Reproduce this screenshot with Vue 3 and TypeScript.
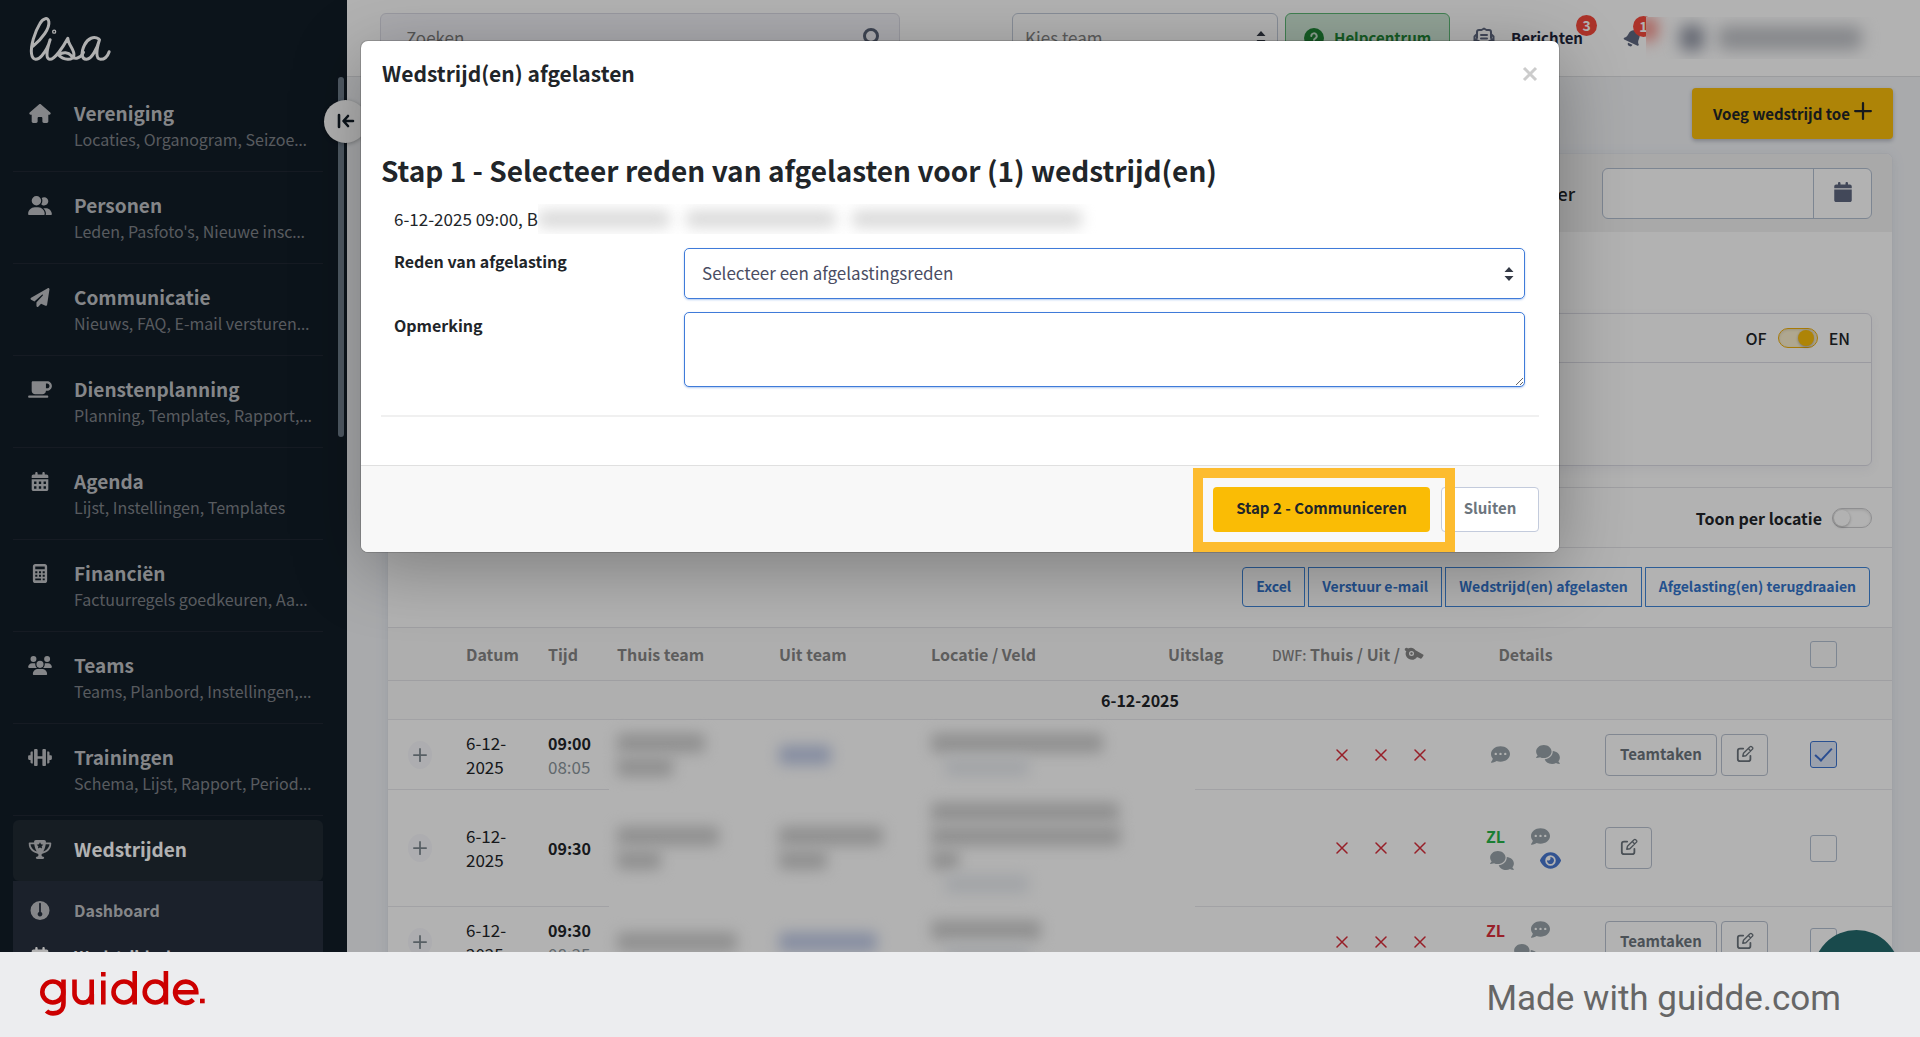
<script setup lang="ts">
import { ref } from 'vue'

interface MenuItem {
  title: string
  sub: string
  more: boolean
  icon: string
}

interface Bar {
  w: number
  tone?: 'blue' | 'pale'
}

interface Match {
  time: string
  meet?: string
  home: Bar[]
  away: Bar[]
  place: Bar[]
  zl?: 'green' | 'red'
  eye?: boolean
  tasks: boolean
  checked: boolean
  tall?: boolean
}

const menu: MenuItem[] = [
  { title: 'Vereniging', sub: 'Locaties, Organogram, Seizoe', more: true, icon: 'home' },
  { title: 'Personen', sub: "Leden, Pasfoto's, Nieuwe insc", more: true, icon: 'people' },
  { title: 'Communicatie', sub: 'Nieuws, FAQ, E-mail versturen', more: true, icon: 'plane' },
  { title: 'Dienstenplanning', sub: 'Planning, Templates, Rapport,', more: true, icon: 'mug' },
  { title: 'Agenda', sub: 'Lijst, Instellingen, Templates', more: false, icon: 'calendar' },
  { title: 'Financiën', sub: 'Factuurregels goedkeuren, Aa', more: true, icon: 'calc' },
  { title: 'Teams', sub: 'Teams, Planbord, Instellingen,', more: true, icon: 'group' },
  { title: 'Trainingen', sub: 'Schema, Lijst, Rapport, Period', more: true, icon: 'dumbbell' },
]

const matches = ref<Match[]>([
  {
    time: '09:00', meet: '08:05', tasks: true, checked: true,
    home: [{ w: 88 }, { w: 56 }], away: [{ w: 52, tone: 'blue' }], place: [{ w: 172 }, { w: 84, tone: 'pale' }],
  },
  {
    time: '09:30', zl: 'green', eye: true, tasks: false, checked: false, tall: true,
    home: [{ w: 102 }, { w: 44 }], away: [{ w: 104 }, { w: 48 }], place: [{ w: 188 }, { w: 190 }, { w: 28 }, { w: 84, tone: 'pale' }],
  },
  {
    time: '09:30', meet: '08:35', zl: 'red', tasks: true, checked: false,
    home: [{ w: 120 }], away: [{ w: 98, tone: 'blue' }], place: [{ w: 110 }, { w: 84, tone: 'pale' }],
  },
])

const actions = ['Excel', 'Verstuur e-mail', 'Wedstrijd(en) afgelasten', 'Afgelasting(en) terugdraaien']
const both = ref(true)
const perLocation = ref(false)
const remark = ref('')
</script>

<template>
  <svg class="defs" aria-hidden="true">
    <symbol id="home" viewBox="0 0 576 512"><path d="M575.8 255.5c0 18-15 32.1-32 32.1h-32l.7 160.2V472c0 22.1-17.9 40-40 40H392c-22.1 0-40-17.9-40-40v-88c0-17.7-14.3-32-32-32h-64c-17.7 0-32 14.3-32 32v88c0 22.1-17.9 40-40 40h-80c-22.1 0-40-17.9-40-40V287.6H32c-18 0-32-14-32-32.1 0-9 3-17 10-24L266.4 8c7-7 15-8 22-8s15 2 21 7l255.400 224.500c8 7 12 15 11 24z" /></symbol>
    <symbol id="people" viewBox="0 0 640 512"><path d="M96 128a128 128 0 1 1 256 0 128 128 0 1 1-256 0zM0 482c0-98 80-178 178-178h92c98 0 178 80 178 178 0 17-13 30-30 30H30c-17 0-30-13-30-30zM609 512H471c6-9 9-20 9-32 0-61-27-115-70-152 2 0 5-.2 7-.2h62c89 0 161 72 161 161 0 13-14 23-31 23zM432 256c-31 0-59-13-79-33 19-27 31-59 31-95 0-27-6-52-18-74 19-14 41-22 66-22 62 0 112 50 112 112s-50 112-112 112z" /></symbol>
    <symbol id="plane" viewBox="0 0 512 512"><path d="M498.100 5.600c10.100 7 15.400 19.100 13.500 31.200l-64 416c-1.500 9.700-7.400 18.200-16 23s-18.900 5.400-28 1.600L284 427.700l-68.500 74.100c-8.900 9.700-22.900 12.900-35.200 8.100S160 493.200 160 480v-83.600c0-4 1.500-7.800 4.200-10.700l167.600-182.900c5.800-6.300 5.600-16-.4-22s-15.700-6.400-22-.7L106 360.800 17.700 316.600C7.100 311.300.3 300.700 0 288.900s5.900-22.800 16.100-28.700l448-256c10.700-6.100 23.900-5.500 34 1.400z" /></symbol>
    <symbol id="mug" viewBox="0 0 640 512"><path fill-rule="evenodd" d="M96 64c0-17.700 14.300-32 32-32h384c70.700 0 128 57.300 128 128s-57.300 128-128 128h-32c0 53-43 96-96 96H192c-53 0-96-43-96-96V64zm384 160h32c35.300 0 64-28.700 64-64s-28.700-64-64-64h-32v128zM32 416h480c17.700 0 32 14.300 32 32s-14.300 32-32 32H32c-17.700 0-32-14.300-32-32s14.300-32 32-32z" /></symbol>
    <symbol id="calendar" viewBox="0 0 448 512"><path fill-rule="evenodd" d="M128 0c17.700 0 32 14.300 32 32v32h128V32c0-17.700 14.300-32 32-32s32 14.300 32 32v32h48c26.500 0 48 21.500 48 48v48H0v-48c0-26.500 21.500-48 48-48h48V32c0-17.700 14.300-32 32-32zM0 192h448v272c0 26.500-21.500 48-48 48H48c-26.500 0-48-21.500-48-48V192zm64 64v64h64v-64H64zm128 0v64h64v-64h-64zm128 0v64h64v-64h-64zM64 384v64h64v-64H64zm128 0v64h64v-64h-64zm128 0v64h64v-64h-64z" /></symbol>
    <symbol id="calendar-solid" viewBox="0 0 448 512"><path d="M96 32v32H48C21.500 64 0 85.500 0 112v48h448v-48c0-26.500-21.500-48-48-48h-48V32c0-17.700-14.300-32-32-32s-32 14.300-32 32v32H160V32c0-17.700-14.300-32-32-32S96 14.300 96 32zm352 160H0v272c0 26.500 21.500 48 48 48h352c26.500 0 48-21.500 48-48V192z" /></symbol>
    <symbol id="calc" viewBox="0 0 384 512"><path fill-rule="evenodd" d="M64 0h256c35 0 64 29 64 64v384c0 35-29 64-64 64H64c-35 0-64-29-64-64V64C0 29 29 0 64 0zm0 64v80h256V64H64zm0 130v52h56v-52H64zm100 0v52h56v-52h-56zm100 0v52h56v-52h-56zM64 290v52h56v-52H64zm100 0v52h56v-52h-56zm100 0v52h56v-52h-56zM64 388v52h156v-52H64zm200 0v52h56v-52h-56z" /></symbol>
    <symbol id="group" viewBox="0 0 640 512"><path d="M144 0a80 80 0 1 1 0 160 80 80 0 1 1 0-160zm368 0a80 80 0 1 1 0 160 80 80 0 1 1 0-160zM0 298.700C0 239.800 47.800 192 106.700 192h42.700c15.900 0 31 3.500 44.600 9.700-1.300 7.200-1.900 14.700-1.900 22.300 0 38.200 16.800 72.500 43.300 96H21.300C9.600 320 0 310.400 0 298.700zM405.300 320c26.600-23.500 43.300-57.800 43.300-96 0-7.600-.7-15-1.900-22.300 13.600-6.300 28.700-9.700 44.600-9.700h42.700c58.900 0 106.700 47.800 106.700 106.700 0 11.800-9.600 21.300-21.300 21.300H405.300zM224 224a96 96 0 1 1 192 0 96 96 0 1 1-192 0zM128 485.300C128 411.700 187.700 352 261.300 352h117.400c73.600 0 133.300 59.700 133.300 133.300 0 14.700-11.900 26.700-26.700 26.700H154.700c-14.700 0-26.700-11.900-26.700-26.700z" /></symbol>
    <symbol id="dumbbell" viewBox="0 0 640 512"><path d="M160 56c0-18 14-32 32-32h32c18 0 32 14 32 32v168h128V56c0-18 14-32 32-32h32c18 0 32 14 32 32v400c0 18-14 32-32 32h-32c-18 0-32-14-32-32V288H256v168c0 18-14 32-32 32h-32c-18 0-32-14-32-32V56zM126 96v320H96c-18 0-32-14-32-32v-64H32c-18 0-32-14-32-32v-64c0-18 14-32 32-32h32v-64c0-18 14-32 32-32h30zM514 96v320h30c18 0 32-14 32-32v-64h32c18 0 32-14 32-32v-64c0-18-14-32-32-32h-32v-64c0-18-14-32-32-32h-30z" /></symbol>
    <symbol id="trophy" viewBox="-16 0 608 512"><path fill-rule="evenodd" d="M176 0h224c27 0 48 22 47 48l-1 16h122c13 0 24 11 24 24 0 92-33 158-80 201-46 43-103 63-146 72-26 10-38 20-38 45 0 23 18 42 41 42h-1c18 0 32 14 32 32s-14 32-32 32H208c-18 0-32-14-32-32s14-32 32-32h-1c23 0 41-19 41-42 0-25-12-35-38-45-43-9-100-29-146-72C17 246-16 180-16 88c0-13 11-24 24-24h122l-1-16c-1-26 20-48 47-48zM33 112c5 66 41 111 74 142 29 26 62 43 92 53-34-56-57-137-66-195H33zm510 0H443c-9 58-32 139-66 195 30-10 63-27 92-53 33-31 69-76 74-142zM288 60l-28 56-61 9 44 43-11 61 56-29 56 29-11-61 44-43-61-9-28-56z" /></symbol>
    <symbol id="gauge" viewBox="0 0 512 512"><path fill-rule="evenodd" d="M0 256a256 256 0 1 1 512 0 256 256 0 1 1-512 0zM280 72c0-13-11-24-24-24s-24 11-24 24v222a64 64 0 1 0 48 0V72z" /></symbol>
    <symbol id="dots" viewBox="0 0 512 512"><path fill-rule="evenodd" d="M256 448c141.400 0 256-93.100 256-208S397.400 32 256 32 0 125.100 0 240c0 45.100 17.700 86.800 47.700 120.900-1.900 24.500-11.400 46.300-21.400 62.900-5.500 9.200-11.100 16.600-15.200 21.600l-6.500 7.400c-4.600 4.600-5.900 11.400-3.400 17.400s8.300 9.900 14.800 9.900c28.700 0 57.600-8.900 81.600-19.300 22.900-10 42.400-21.900 54.300-30.600 31.800 11.500 67 17.900 104.100 17.900zM128 208a32 32 0 1 1 0 64 32 32 0 1 1 0-64zm128 0a32 32 0 1 1 0 64 32 32 0 1 1 0-64zm96 32a32 32 0 1 1 64 0 32 32 0 1 1-64 0z" /></symbol>
    <symbol id="comments" viewBox="0 0 640 512"><path d="M208 352c114.900 0 208-78.800 208-176S322.900 0 208 0 0 78.800 0 176c0 38.600 14.700 74.300 39.600 103.400-3.500 9.400-8.700 17.700-14.200 24.700-4.800 6.200-9.700 11-13.300 14.300L6.500 323C1 327.200-1.400 334.400.8 340.900S9.100 352 16 352c21.800 0 43.800-5.600 62.100-12.500 9.200-3.500 17.800-7.400 25.200-11.400C134.100 343.300 169.800 352 208 352zm240-176c0 112.300-99.100 196.900-216.500 207C255.800 457.400 336.400 512 432 512c38.200 0 73.900-8.700 104.700-23.900 7.500 4 16 7.900 25.200 11.400 18.300 6.900 40.300 12.500 62.100 12.500 6.900 0 13.100-4.500 15.200-11.100s-.2-13.800-5.800-17.900l-5.600-4.700c-3.600-3.300-8.500-8.100-13.300-14.300-5.500-7-10.700-15.400-14.200-24.700 24.900-29 39.600-64.700 39.600-103.400 0-92.800-84.900-168.900-192.600-175.500.4 5.100.7 10.300.7 15.600z" /></symbol>
    <symbol id="eye" viewBox="0 0 576 512"><path fill-rule="evenodd" d="M288 32c-80.800 0-145.500 36.800-192.600 80.600C48.600 156 17.300 208 2.500 243.700c-3.300 7.900-3.300 16.700 0 24.600C17.300 304 48.600 356 95.400 399.400 142.500 443.200 207.200 480 288 480s145.500-36.800 192.600-80.600c46.800-43.500 78.100-95.400 93-131.100 3.300-7.900 3.300-16.700 0-24.600-14.900-35.700-46.200-87.700-93-131.100C433.500 68.800 368.800 32 288 32zM144 256a144 144 0 1 1 288 0 144 144 0 1 1-288 0zm144-64c0 35.300-28.700 64-64 64-7.100 0-13.900-1.200-20.300-3.300-5.500-1.800-11.900 1.600-11.700 7.400.3 6.900 1.300 13.800 3.200 20.700 13.700 51.200 66.400 81.600 117.600 67.900s81.600-66.400 67.900-117.600c-11.100-41.500-47.800-69.400-88.600-71.100-5.800-.2-9.200 6.100-7.400 11.700 2.100 6.400 3.300 13.200 3.300 20.300z" /></symbol>
    <symbol id="edit" viewBox="0 0 20 20"><g fill="none" stroke="currentColor" stroke-width="2" stroke-linejoin="round" stroke-linecap="round"><path d="M8 4H4.500A2.500 2.500 0 0 0 2 6.500v9A2.500 2.500 0 0 0 4.500 18h9a2.500 2.500 0 0 0 2.500-2.500V12" /><path d="M7.500 12.500l.8-3.300 7.300-7.300a1.300 1.300 0 0 1 1.900 0l.8.8a1.300 1.300 0 0 1 0 1.900l-7.300 7.300zM13.700 4l2.600 2.600" stroke-width="1.500" /></g></symbol>
    <symbol id="cross" viewBox="0 0 12 12"><path d="M1 1l10 10M11 1L1 11" fill="none" stroke="currentColor" stroke-width="1.500" stroke-linecap="round" /></symbol>
    <symbol id="plus" viewBox="0 0 16 16"><path d="M8 1v14M1 8h14" fill="none" stroke="currentColor" stroke-width="2" stroke-linecap="round" /></symbol>
    <symbol id="sort" viewBox="0 0 10 14"><path d="M5 0l4.500 5h-9zM5 14l4.500-5h-9z" /></symbol>
    <symbol id="bell" viewBox="0 0 18 18"><g transform="rotate(25 9 9)"><path d="M9 1c.7 0 1.200.5 1.200 1.100 2.600.6 4 2.600 4 5.200 0 2.500.6 3.700 2 4.900.4.400.2 1.300-.6 1.300H2.400c-.8 0-1-.9-.6-1.300 1.400-1.200 2-2.400 2-4.900 0-2.600 1.400-4.600 4-5.200C7.800 1.500 8.300 1 9 1zM6.800 14.800h4.400a2.200 2.200 0 0 1-4.400 0z" /></g></symbol>
    <symbol id="whistle" viewBox="0 0 20 14"><path fill-rule="evenodd" d="M1 1.500C2 .5 3.500.5 4 1.500 7 0 10 .8 11.500 3.200L19 7.500c.6.4.7 1 .3 1.500l-1.600 2.300c-.3.500-.9.600-1.400.3L13 9.900C11.500 12.600 8 13.500 5 12 2 10.300.8 7 2.300 4 1 4 .3 2.500 1 1.500zM7.500 4a2.500 2.500 0 1 0 0 5 2.500 2.500 0 0 0 0-5z" /><circle cx="7.500" cy="6.500" r="1.200" /></symbol>
  </svg>

  <div class="app">
    <div class="screen">
      <aside class="sidebar">
        <a href="#" class="logo" aria-label="lisa">
          <svg viewBox="80 40 260 150" fill="none" stroke="currentColor" stroke-width="9" stroke-linecap="round" stroke-linejoin="round">
            <path d="M97 140C125 118 148 85 145 66C143 52 128 54 118 72C102 98 90 140 93 162C96 184 112 182 124 168C138 152 145 135 149 120C142 142 132 178 148 179C162 180 188 142 202 116C204 138 224 152 220 168C216 184 190 182 174 166C188 156 204 158 212 168C222 182 240 176 249 158" />
            <path d="M295 118C280 108 262 116 252 136C240 160 244 180 258 179C274 178 290 146 297 120C288 148 284 178 300 179C314 179 322 168 326 156" />
            <circle cx="161" cy="96" r="2" />
          </svg>
        </a>
        <nav>
          <a v-for="m in menu" :key="m.title" href="#" class="item">
            <svg class="ico"><use :href="'#' + m.icon" /></svg>
            <span class="item-text">
              <span class="item-title">{{ m.title }}</span>
              <span class="item-sub">{{ m.sub }}<span v-if="m.more" class="more">…</span></span>
            </span>
          </a>
          <a href="#" class="item-active">
            <svg class="ico"><use href="#trophy" /></svg>
            <span class="item-title">Wedstrijden</span>
          </a>
          <div class="submenu">
            <a href="#" class="sub-item"><svg class="ico"><use href="#gauge" /></svg>Dashboard</a>
            <a href="#" class="sub-item current"><svg class="ico"><use href="#calendar" /></svg>Wedstrijdschema</a>
          </div>
        </nav>
        <span class="scrollbar"></span>
        <button class="collapse" aria-label="Menu inklappen">
          <svg width="18" height="16" viewBox="0 0 18 16" fill="none" stroke="currentColor" stroke-width="2.600" stroke-linecap="round" stroke-linejoin="round"><path d="M2 2v12M16 8H8M11 3L6.500 8l4.500 5" /></svg>
        </button>
      </aside>

      <div class="main">
        <header class="topbar">
          <label class="search">
            <input type="text" placeholder="Zoeken" aria-label="Zoeken" />
            <svg width="20" height="20" viewBox="0 0 20 20" fill="none" stroke="currentColor" stroke-width="3"><circle cx="10" cy="8" r="6.500" /><path d="M14 13l4 5" /></svg>
          </label>
          <div class="team">
            <select aria-label="Kies team"><option>Kies team</option></select>
            <svg class="sort"><use href="#sort" /></svg>
          </div>
          <button class="help">
            <svg width="20" height="20" viewBox="0 0 20 20"><circle cx="10" cy="10" r="10" fill="currentColor" /><path d="M7.300 8a2.700 2.700 0 1 1 4 2.400c-.9.500-1.300.9-1.300 1.700M10 14.300v.4" fill="none" stroke="#c9e5d0" stroke-width="2" stroke-linecap="round" /></svg>
            <span>Helpcentrum</span>
          </button>
          <a href="#" class="messages">
            <svg width="22" height="22" viewBox="0 0 22 22" fill="none" stroke="currentColor" stroke-width="2" stroke-linecap="round" stroke-linejoin="round"><path d="M4 11V5c0-1 .8-2 2-2h2.500L11 1.500 13.500 3H16c1.200 0 2 1 2 2v6M8 8h6M8 11.500h6M1.500 9.500V19h19V9.500l-2-2M3.500 7.500l-2 2M2 12l7 4h4l7-4" /></svg>
            <span>Berichten</span>
            <b class="badge">3</b>
          </a>
          <a href="#" class="bell" aria-label="Meldingen">
            <svg width="20" height="20"><use href="#bell" /></svg>
            <b class="badge">1</b>
          </a>
          <div class="account"><i class="smudge red"></i><i class="smudge face"></i><i class="smudge name"></i></div>
        </header>

        <main class="content">
          <button class="add"><span>Voeg wedstrijd toe</span><svg width="18" height="18"><use href="#plus" /></svg></button>

          <section class="card">
            <div class="card-head">
              <label for="filter">Filter</label>
              <div class="date-group">
                <input id="filter" type="text" />
                <button aria-label="Kalender"><svg width="18" height="20"><use href="#calendar-solid" /></svg></button>
              </div>
            </div>
            <div class="filters">
              <div class="panel">
                <div class="panel-head">
                  <span>OF</span>
                  <input v-model="both" type="checkbox" class="switch" aria-label="OF of EN" />
                  <span>EN</span>
                </div>
              </div>
            </div>
            <div class="location">
              <label for="per-location">Toon per locatie</label>
              <input id="per-location" v-model="perLocation" type="checkbox" class="switch" />
            </div>
            <div class="actions">
              <button v-for="a in actions" :key="a">{{ a }}</button>
            </div>
            <table>
              <colgroup>
                <col style="width: 70px" /><col style="width: 82px" /><col style="width: 69px" />
                <col style="width: 162px" /><col style="width: 152px" /><col />
                <col style="width: 35px" /><col style="width: 69px" /><col style="width: 190px" />
                <col style="width: 143px" /><col style="width: 205px" /><col style="width: 90px" />
              </colgroup>
              <thead>
                <tr>
                  <th></th>
                  <th>Datum</th>
                  <th>Tijd</th>
                  <th>Thuis team</th>
                  <th>Uit team</th>
                  <th>Locatie / Veld</th>
                  <th colspan="2">Uitslag</th>
                  <th><small>DWF:</small> Thuis / Uit / <svg width="20" height="14"><use href="#whistle" /></svg></th>
                  <th class="mid">Details</th>
                  <th></th>
                  <th><input type="checkbox" class="tick" aria-label="Alles selecteren" /></th>
                </tr>
              </thead>
              <tbody>
                <tr class="day"><td colspan="12">6-12-2025</td></tr>
                <tr v-for="(m, i) in matches" :key="i" :class="{ tall: m.tall }">
                  <td><button class="expand" aria-label="Uitklappen"><svg width="14" height="14"><use href="#plus" /></svg></button></td>
                  <td>6-12-<br />2025</td>
                  <td><b>{{ m.time }}</b><template v-if="m.meet"><br /><span class="meet">{{ m.meet }}</span></template></td>
                  <td class="hidden"><i v-for="(b, k) in m.home" :key="k" class="bar" :class="b.tone" :style="{ width: b.w + 'px' }"></i></td>
                  <td class="hidden"><i v-for="(b, k) in m.away" :key="k" class="bar" :class="b.tone" :style="{ width: b.w + 'px' }"></i></td>
                  <td class="hidden"><i v-for="(b, k) in m.place" :key="k" class="bar" :class="b.tone" :style="{ width: b.w + 'px' }"></i></td>
                  <td class="hidden"></td>
                  <td></td>
                  <td><span class="dwf"><svg v-for="n in 3" :key="n" width="12" height="12"><use href="#cross" /></svg></span></td>
                  <td>
                    <div v-if="m.zl" class="details two">
                      <span class="first"><b :class="m.zl">ZL</b><svg width="19" height="19"><use href="#dots" /></svg></span>
                      <span><svg width="24" height="19"><use href="#comments" /></svg><svg v-if="m.eye" class="eye" width="21" height="19"><use href="#eye" /></svg></span>
                    </div>
                    <div v-else class="details">
                      <svg width="19" height="19"><use href="#dots" /></svg>
                      <svg width="24" height="19"><use href="#comments" /></svg>
                    </div>
                  </td>
                  <td>
                    <div class="row-actions">
                      <button v-if="m.tasks">Teamtaken</button>
                      <button class="edit" aria-label="Bewerken"><svg width="18" height="18"><use href="#edit" /></svg></button>
                    </div>
                  </td>
                  <td><input v-model="m.checked" type="checkbox" class="tick" aria-label="Selecteer wedstrijd" /></td>
                </tr>
              </tbody>
            </table>
          </section>
        </main>
        <span class="chat"></span>
      </div>

      <div class="overlay">
        <div class="modal" role="dialog" aria-modal="true" aria-labelledby="modal-title">
          <div class="modal-head">
            <h1 id="modal-title">Wedstrijd(en) afgelasten</h1>
            <button aria-label="Sluiten"><svg width="16" height="16" viewBox="0 0 16 16"><path d="M2 2l12 12M14 2L2 14" fill="none" stroke="currentColor" stroke-width="3" /></svg></button>
          </div>
          <div class="modal-body">
            <h2>Stap 1 - Selecteer reden van afgelasten voor (1) wedstrijd(en)</h2>
            <p class="match"><span>6-12-2025 09:00, B</span><span class="redacted"><i></i><i></i><i></i></span></p>
            <div class="field">
              <label for="reason">Reden van afgelasting</label>
              <div class="select">
                <select id="reason"><option>Selecteer een afgelastingsreden</option></select>
                <svg class="sort"><use href="#sort" /></svg>
              </div>
            </div>
            <div class="field">
              <label for="remark">Opmerking</label>
              <textarea id="remark" v-model="remark"></textarea>
            </div>
            <hr />
          </div>
          <div class="modal-foot">
            <div class="spot"><button class="primary">Stap 2 - Communiceren</button></div>
            <button class="secondary">Sluiten</button>
          </div>
        </div>
      </div>
    </div>

    <footer class="brand">
      <svg width="166" height="48" viewBox="0 0 166 48" fill="none" stroke="currentColor" stroke-width="4.600" role="img" aria-label="guidde.">
        <circle cx="12.800" cy="23" r="10.500" />
        <path d="M23.500 10.500V34c0 7-4.500 10.400-10.500 10.400-3 0-5-.8-6.500-2.400" />
        <path d="M34.500 10.500V25a8.600 8.600 0 0 0 17.200 0V10.500M51.800 25v10.500" />
        <path d="M63.300 11.500v24M63.300 3v4.600" />
        <circle cx="84" cy="23" r="10.500" /><path d="M94.700 2v33.500" />
        <circle cx="115.200" cy="23" r="10.500" /><path d="M125.900 2v33.500" />
        <path d="M136 23.200h20.300a10.600 10.600 0 1 0-3 7.400" />
        <path d="M160 32h4.700" />
      </svg>
      <span>Made with guidde.com</span>
    </footer>
  </div>
</template>

<style>
body {
  margin: 0;
  background: #ecedef;
}
</style>

<style scoped>
* {
  box-sizing: border-box;
}
.app {
  height: 100vh;
  display: grid;
  grid-template-rows: minmax(0, 1fr) 85px;
  font: 400 16px/24px "Noto Sans CJK SC", "Noto Sans", sans-serif;
  color: #212529;
}
button, input, select, textarea {
  font: inherit;
  color: inherit;
  margin: 0;
}
button {
  padding: 0 0 2px;
  background: none;
  font-size: 15px;
  font-weight: 700;
}
a {
  color: inherit;
  text-decoration: none;
}
svg {
  fill: currentColor;
  flex: none;
}
svg[fill="none"] {
  fill: none;
}
.defs {
  position: absolute;
  width: 0;
  height: 0;
}
.screen {
  position: relative;
  overflow: hidden;
  display: flex;
}

/* sidebar */
.sidebar {
  position: relative;
  flex: none;
  width: 347px;
  padding: 0 24px 0 13px;
  background: #121d28;
  color: #bfc1c4;
}
.logo {
  display: block;
  height: 80px;
  padding: 13px 0 0 14px;
  color: #fdfdfd;
}
.logo svg {
  width: 87px;
  height: 50px;
}
.item {
  display: flex;
  height: 92px;
  padding: 19px 0 0 15px;
  gap: 22px;
  border-bottom: 1px solid #202733;
}
.ico {
  width: 24px;
  height: 19px;
  margin-top: 5px;
}
.item-text {
  min-width: 0;
  flex: 1;
}
.item-title {
  display: block;
  font-size: 19px;
  line-height: 28px;
  font-weight: 700;
}
.item-sub {
  display: block;
  white-space: nowrap;
  color: #7f8388;
}
.more {
  font-family: "Noto Sans", sans-serif;
}
.item-active {
  display: flex;
  gap: 22px;
  margin-top: 4px;
  height: 61px;
  padding: 15px;
  border-radius: 6px;
  background: #202a33;
  color: #fff;
}
.item-active .ico {
  color: #bfc1c4;
}
.submenu {
  background: #28303e;
  padding-top: 6px;
}
.sub-item {
  display: flex;
  align-items: center;
  gap: 22px;
  height: 46px;
  padding-left: 15px;
  font-weight: 700;
}
.sub-item .ico {
  margin-top: 0;
}
.sub-item.current {
  color: #fff;
}
.scrollbar {
  position: absolute;
  left: 338px;
  top: 77px;
  width: 6px;
  height: 360px;
  border-radius: 3px;
  background: #71808f;
}
.collapse {
  position: absolute;
  z-index: 2;
  left: 324px;
  top: 100px;
  width: 43px;
  height: 43px;
  border: 0;
  border-radius: 50%;
  display: flex;
  align-items: center;
  justify-content: center;
  background: #fff;
  color: #121d28;
  box-shadow: 0 1px 4px rgba(0, 0, 0, 0.3);
}

/* top bar */
.main {
  position: relative;
  flex: 1;
  min-width: 0;
  background: #f2f4f7;
}
.topbar {
  display: flex;
  align-items: center;
  height: 77px;
  padding: 0 27px 0 33px;
  background: #fff;
  border-bottom: 1px solid #dfe0e3;
}
.search, .team, .help {
  display: flex;
  align-items: center;
  height: 50px;
  border: 1px solid #dcdce6;
  border-radius: 6px;
}
.search {
  width: 520px;
  padding: 0 18px 0 25px;
  background: #f4f4f9;
  color: #5a6378;
}
.search input {
  flex: 1;
  min-width: 0;
  border: 0;
  padding: 0;
  background: none;
  font-size: 17px;
}
.search input::placeholder {
  color: #7c7c7c;
}
.team {
  position: relative;
  width: 266px;
  margin-left: auto;
  border-color: #c3ccda;
}
.team select, .select select {
  appearance: none;
  width: 100%;
  height: 100%;
  border: 0;
  padding: 0 12px;
  background: none;
  color: #858585;
  font-size: 17px;
}
.sort {
  position: absolute;
  right: 11px;
  width: 10px;
  height: 14px;
  pointer-events: none;
  color: #343a46;
}
.help {
  justify-content: center;
  gap: 10px;
  width: 165px;
  margin-left: 7px;
  padding: 0;
  border-color: #5cb874;
  background: #d0e8d7;
  color: #1f8436;
}
.messages, .bell {
  position: relative;
  display: flex;
  align-items: center;
  gap: 16px;
  color: #5f6880;
}
.messages {
  margin-left: 23px;
}
.messages span {
  color: #20253a;
  font-size: 15px;
  font-weight: 700;
}
.bell {
  margin-left: 40px;
}
.badge {
  position: absolute;
  left: 103px;
  top: -11px;
  width: 21px;
  height: 21px;
  border-radius: 50%;
  background: #f64a3d;
  color: #fff;
  font-size: 14px;
  line-height: 20px;
  text-align: center;
}
.bell .badge {
  left: 10px;
  top: -12px;
}
.account {
  position: relative;
  z-index: 1;
  display: flex;
  align-items: center;
  gap: 14px;
  width: 247px;
  height: 42px;
  margin-left: 3px;
  overflow: hidden;
  background: #fff;
}
.smudge {
  border-radius: 8px;
  background: #9ea2ac;
  filter: blur(8px);
}
.smudge.red {
  align-self: flex-start;
  width: 16px;
  height: 24px;
  margin-left: -6px;
  background: #f26a5f;
}
.smudge.face {
  width: 24px;
  height: 26px;
  margin-left: 10px;
  background: #8e93a2;
}
.smudge.name {
  width: 144px;
  height: 24px;
  background: #c0c2c7;
}

/* content */
.content {
  padding: 11px 27px 0 40px;
}
.add {
  display: flex;
  align-items: center;
  justify-content: center;
  gap: 4px;
  width: 201px;
  height: 51px;
  margin: 0 0 14px auto;
  padding: 0;
  border: 0;
  border-radius: 4px;
  background: #f9bd0b;
  color: #212529;
  box-shadow: 0 2px 4px rgba(40, 50, 80, 0.3);
}
.add svg {
  margin-bottom: 5px;
}
.card {
  border: 1px solid #e6e8ee;
  border-radius: 7px;
  background: #fff;
  box-shadow: 0 2px 12px rgba(120, 140, 180, 0.15);
}
.card-head {
  display: flex;
  align-items: center;
  justify-content: flex-end;
  gap: 27px;
  height: 78px;
  padding-right: 20px;
  background: #f2f2f2;
  border-radius: 6px 6px 0 0;
}
.card-head label {
  font-size: 18px;
  font-weight: 500;
}
.date-group {
  display: flex;
  height: 51px;
  border: 1px solid #b4c0d2;
  border-radius: 6px;
  background: #fff;
}
.date-group input {
  width: 210px;
  border: 0;
  background: none;
}
.date-group button {
  display: flex;
  align-items: center;
  justify-content: center;
  width: 58px;
  border: 0;
  border-left: 1px solid #b4c0d2;
  color: #5f6880;
}
.filters {
  padding: 81px 20px 21px;
  border-bottom: 1px solid #e4e4e8;
}
.panel {
  height: 153px;
  border: 1px solid #dddde6;
  border-radius: 6px;
  box-shadow: 0 4px 10px rgba(120, 120, 150, 0.08);
}
.panel-head, .location, .actions {
  display: flex;
  align-items: center;
  justify-content: flex-end;
}
.panel-head {
  height: 49px;
  gap: 11px;
  padding-right: 21px;
  border-bottom: 1px solid #dddde6;
  font-weight: 500;
}
.location {
  gap: 10px;
  height: 60px;
  padding-right: 20px;
  border-bottom: 1px solid #e4e4e8;
  font-weight: 700;
}
.switch {
  appearance: none;
  width: 40px;
  height: 20px;
  padding: 1px;
  display: flex;
  align-items: center;
  border: 1px solid #cccccf;
  border-radius: 10px;
  box-shadow: inset 0 1px 3px rgba(0, 0, 0, 0.12);
}
.switch::before {
  content: "";
  width: 16px;
  height: 16px;
  border-radius: 50%;
  background: #fff;
  box-shadow: 0 1px 3px rgba(0, 0, 0, 0.3);
}
.switch:checked {
  justify-content: flex-end;
  padding-right: 3px;
  border-color: #efaf0a;
  background: #fbf0cf;
}
.switch:checked::before {
  background: #f9bd0b;
}
.actions {
  gap: 3px;
  height: 80px;
  padding: 0 22px 1px 0;
  border-bottom: 1px solid #e4e4e8;
}
.actions button {
  height: 40px;
  padding: 0 13px 2px;
  border: 1px solid #3f86d8;
  color: #3374cc;
  font-size: 14px;
}
.actions button:first-child {
  border-radius: 4px 0 0 4px;
}
.actions button:last-child {
  border-radius: 0 4px 4px 0;
}

/* table */
table {
  width: 100%;
  table-layout: fixed;
  border-collapse: separate;
  border-spacing: 0;
}
th {
  height: 53px;
  padding: 0 8px;
  background: #fafafa;
  border-bottom: 1px solid #e4e4e8;
  color: #868686;
  font-weight: 700;
  text-align: left;
  white-space: nowrap;
}
th small {
  font-size: 14px;
  font-weight: 500;
}
.mid {
  text-align: center;
}
td {
  height: 70px;
  padding: 0 8px;
  border-bottom: 1px solid #e8e8ec;
  font-size: 17px;
}
.day td {
  height: 39px;
  background: #fbfbfb;
  font-size: 16px;
  font-weight: 700;
  text-align: center;
}
.tall td {
  height: 117px;
}
td b {
  font-size: 16px;
  font-weight: 700;
}
td.hidden {
  border-bottom-color: transparent;
}
.meet {
  color: #8c969c;
}
.bar {
  display: block;
  height: 20px;
  margin: 4px 0;
  border-radius: 4px;
  background: #d0d0d0;
  filter: blur(7px);
}
.bar.blue {
  background: #c3cde8;
}
.bar.pale {
  margin-left: 14px;
  background: #eaedf1;
}
.expand {
  display: flex;
  align-items: center;
  justify-content: center;
  width: 24px;
  height: 28px;
  margin-left: 12px;
  padding: 0;
  border: 0;
  border-radius: 50%;
  background: #f8f8fd;
  color: #7d8890;
}
.dwf {
  display: flex;
  gap: 27px;
  margin-left: 64px;
  color: #d92d3a;
}
.details, .details span {
  display: flex;
  align-items: center;
  justify-content: center;
  gap: 26px;
  color: #98a3a9;
}
.details.two {
  flex-direction: column;
  gap: 0;
}
.details.two span {
  height: 24px;
}
.details .first {
  padding-right: 15px;
}
.details .green {
  color: #26b54a;
}
.details .red {
  color: #dc2f3c;
}
.details .eye {
  color: #4878d0;
}
.row-actions {
  display: flex;
  gap: 4px;
}
.row-actions button {
  display: flex;
  align-items: center;
  justify-content: center;
  width: 112px;
  height: 42px;
  border: 1px solid #b9c2d0;
  border-radius: 4px;
  color: #6c757d;
}
.row-actions .edit {
  width: 47px;
}
.tick {
  appearance: none;
  display: grid;
  place-items: center;
  width: 27px;
  height: 27px;
  border: 1px solid #b4c0d2;
  border-radius: 3px;
}
.tick:checked {
  border-color: #3d74d0;
  background: #dfe7f7;
}
.tick:checked::before {
  content: "";
  width: 15px;
  height: 7px;
  margin-top: -4px;
  border: solid #3d6fd0;
  border-width: 0 0 2px 2px;
  transform: rotate(-47deg);
}
.chat {
  position: absolute;
  right: 20px;
  bottom: -65px;
  width: 87px;
  height: 87px;
  border-radius: 50%;
  background: #256a6d;
}

/* dialog */
.overlay {
  position: absolute;
  inset: 0;
  z-index: 5;
  display: flex;
  align-items: flex-start;
  justify-content: center;
  padding: 41px 20px 0;
  background: rgba(0, 0, 0, 0.3);
}
.modal {
  width: 100%;
  max-width: 1198px;
  border-radius: 7px;
  background: #fff;
  box-shadow: 0 0 0 1px rgba(0, 0, 0, 0.15), 0 16px 70px rgba(0, 0, 0, 0.3);
}
.modal-head {
  display: flex;
  align-items: center;
  justify-content: space-between;
  height: 65px;
  padding: 0 21px;
}
.modal-head h1 {
  margin: 0;
  padding-bottom: 2px;
  font-size: 21px;
  font-weight: 700;
}
.modal-head button {
  display: flex;
  padding: 0;
  border: 0;
  color: #cccccc;
}
.modal-body {
  padding: 44px 20px 48px;
}
.modal-body h2 {
  margin: 0 0 14px;
  font-size: 28px;
  line-height: 40px;
  font-weight: 700;
}
.match {
  display: flex;
  align-items: center;
  height: 30px;
  margin: 0 0 14px 13px;
  font-size: 17px;
}
.redacted {
  display: flex;
  align-items: center;
  gap: 16px;
  width: 580px;
  height: 30px;
  overflow: hidden;
}
.redacted i {
  width: 150px;
  height: 18px;
  border-radius: 6px;
  background: #dbdbdb;
  filter: blur(7px);
}
.redacted i:first-child {
  width: 132px;
}
.redacted i:last-child {
  width: 230px;
}
.field {
  display: flex;
  align-items: flex-start;
  margin: 0 14px 13px 13px;
}
.field label {
  width: 290px;
  flex: none;
  padding-top: 1px;
  font-weight: 700;
}
.select, .field textarea {
  flex: 1;
  border: 1px solid #3f7bd9;
  border-radius: 5px;
  box-shadow: 0 1px 2px rgba(63, 123, 217, 0.4);
}
.select {
  position: relative;
  display: flex;
  align-items: center;
  height: 51px;
}
.select select {
  padding: 0 17px 2px;
  color: #4a4d63;
}
.select .sort {
  right: 10px;
}
.field textarea {
  height: 75px;
  background: #fff;
}
hr {
  height: 2px;
  margin: 28px 0 0;
  border: 0;
  background: #f0f0f0;
}
.modal-foot {
  display: flex;
  align-items: center;
  justify-content: flex-end;
  gap: 11px;
  height: 87px;
  padding-right: 20px;
  border-top: 1px solid #e0e0e0;
  border-radius: 0 0 7px 7px;
  background: #f8f8f8;
}
.spot {
  position: relative;
}
.spot::after {
  content: "";
  position: absolute;
  inset: -19px -25px -20px -20px;
  border: 10px solid #fdbc2f;
  pointer-events: none;
}
.primary, .secondary {
  display: block;
  height: 45px;
  border-radius: 4px;
}
.primary {
  width: 217px;
  border: 0;
  background: #fabc05;
}
.secondary {
  width: 98px;
  border: 1px solid #c3cbdc;
  background: #fff;
  color: #6c757d;
}

/* branding */
.brand {
  display: flex;
  align-items: center;
  justify-content: space-between;
  padding: 0 79px 3px 40px;
  background: #ecedef;
  color: #cc0000;
}
.brand span {
  padding-top: 11px;
  font: 400 35px/40px Roboto, sans-serif;
  color: #666666;
}
</style>
